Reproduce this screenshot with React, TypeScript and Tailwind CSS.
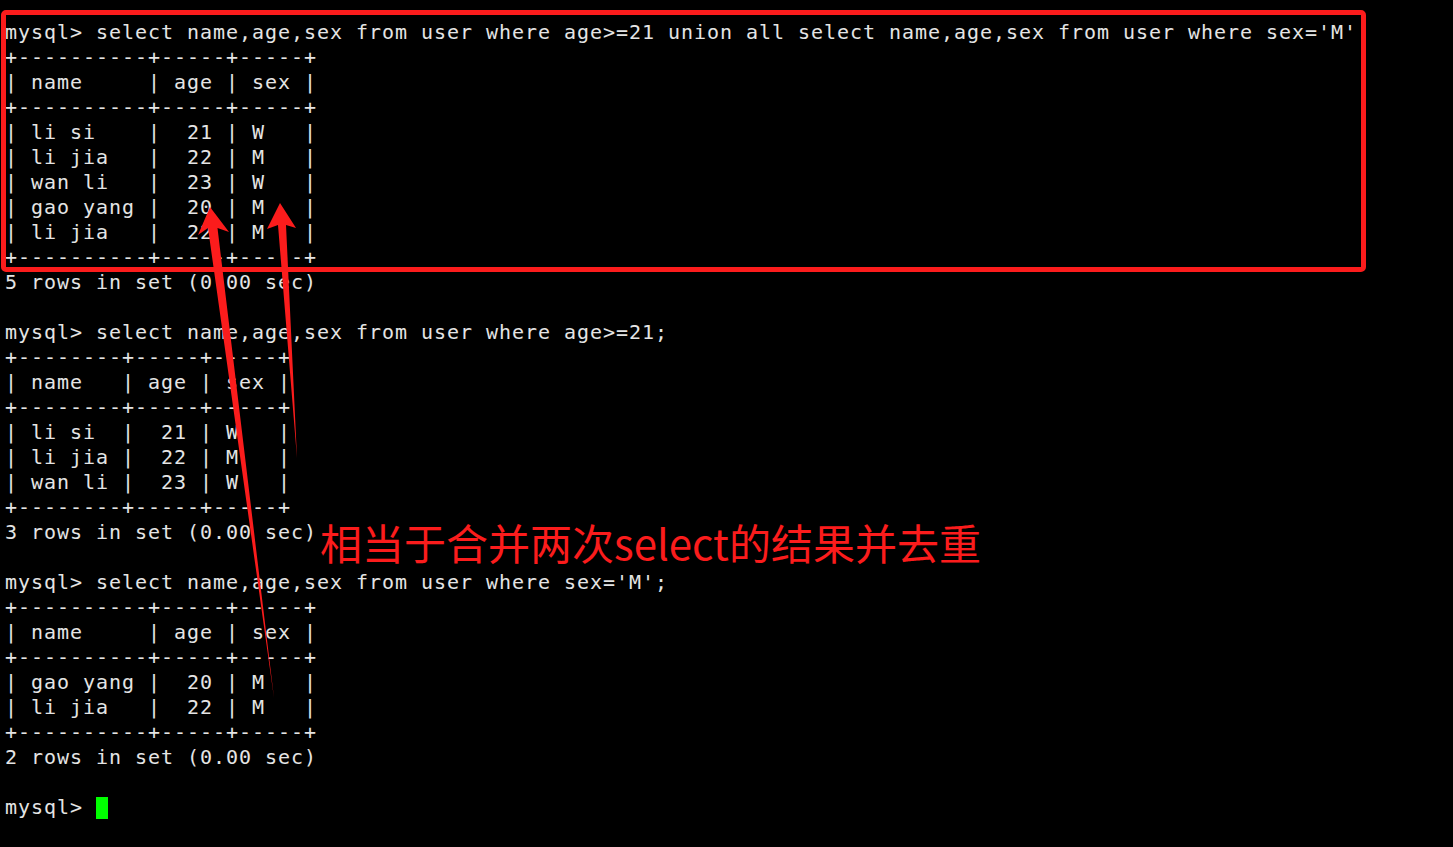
const lines = [
  "mysql> select name,age,sex from user where age>=21 union all select name,age,sex from user where sex='M'",
  "+----------+-----+-----+",
  "| name     | age | sex |",
  "+----------+-----+-----+",
  "| li si    |  21 | W   |",
  "| li jia   |  22 | M   |",
  "| wan li   |  23 | W   |",
  "| gao yang |  20 | M   |",
  "| li jia   |  22 | M   |",
  "+----------+-----+-----+",
  "5 rows in set (0.00 sec)",
  "",
  "mysql> select name,age,sex from user where age>=21;",
  "+--------+-----+-----+",
  "| name   | age | sex |",
  "+--------+-----+-----+",
  "| li si  |  21 | W   |",
  "| li jia |  22 | M   |",
  "| wan li |  23 | W   |",
  "+--------+-----+-----+",
  "3 rows in set (0.00 sec)",
  "",
  "mysql> select name,age,sex from user where sex='M';",
  "+----------+-----+-----+",
  "| name     | age | sex |",
  "+----------+-----+-----+",
  "| gao yang |  20 | M   |",
  "| li jia   |  22 | M   |",
  "+----------+-----+-----+",
  "2 rows in set (0.00 sec)",
  "",
]

export default function App() {
  return (
    <div className="relative min-h-[847px] w-full overflow-hidden bg-black">
      <div className="pl-[5px] pt-[20px] font-['DejaVu_Sans_Mono',monospace] text-[20px] leading-[25px] tracking-[0.96px] text-[#e4e4e4]">
        {lines.map((line, i) => (
          <div key={i} className="h-[25px] whitespace-pre">
            {line}
          </div>
        ))}
        <div className="flex h-[25px] items-center whitespace-pre">
          <span>mysql&gt; </span>
          <span className="h-[22px] w-[12px] bg-[#00ff00]" />
        </div>
      </div>

      {/* red annotation box */}
      <div className="absolute left-[1px] top-[10px] h-[262px] w-[1365px] rounded-[5px] border-[5px] border-[#fb1c1c]" />

      {/* arrows */}
      <svg className="absolute inset-0" width="1453" height="847" viewBox="0 0 1453 847">
        <polygon
          points="210,207 229,232 217.5,228 274,698 208,228 198,235"
          fill="#fb1c1c"
        />
        <polygon
          points="280,203 296,228 286,225 297,458 278,225 267,229"
          fill="#fb1c1c"
        />
      </svg>

      <div className="absolute left-[320px] top-[521px] whitespace-nowrap font-['Noto_Sans_CJK_SC',sans-serif] text-[42px] leading-[42px] text-[#fb1c1c]">
        相当于合并两次select的结果并去重
      </div>
    </div>
  )
}
